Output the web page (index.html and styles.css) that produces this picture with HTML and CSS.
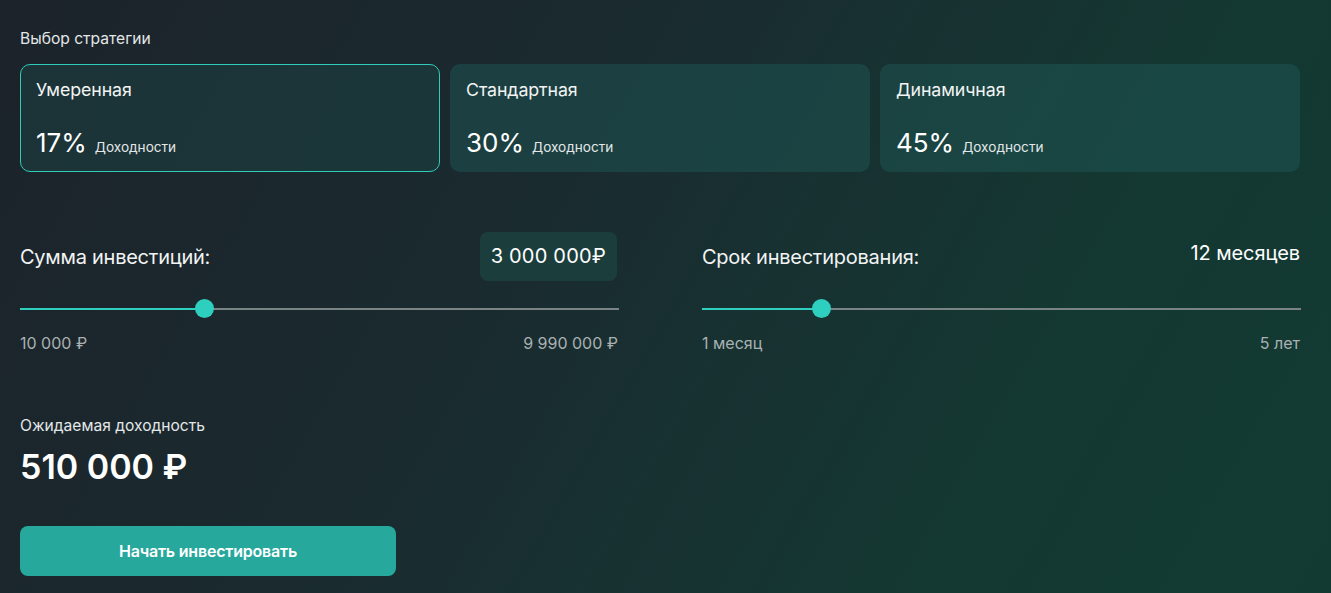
FILE: index.html
```html
<!DOCTYPE html>
<html lang="ru">
<head>
<meta charset="utf-8">
<title>Калькулятор</title>
<link rel="stylesheet" href="styles.css">
</head>
<body>
<main class="calc">
  <div class="section-label">Выбор стратегии</div>
  <div class="strategies">
    <div class="card active">
      <div class="card-title">Умеренная</div>
      <div class="card-yield"><span class="pct">17%</span><span class="pct-label">Доходности</span></div>
    </div>
    <div class="card">
      <div class="card-title">Стандартная</div>
      <div class="card-yield"><span class="pct">30%</span><span class="pct-label">Доходности</span></div>
    </div>
    <div class="card">
      <div class="card-title">Динамичная</div>
      <div class="card-yield"><span class="pct">45%</span><span class="pct-label">Доходности</span></div>
    </div>
  </div>

  <div class="sliders">
    <div class="slider-block">
      <div class="slider-head">
        <span class="slider-title">Сумма инвестиций:</span>
        <span class="value-box">3 000 000₽</span>
      </div>
      <div class="track">
        <div class="fill" style="width:184px"></div>
        <div class="thumb" style="left:175px"></div>
      </div>
      <div class="range-labels"><span>10 000 ₽</span><span>9 990 000 ₽</span></div>
    </div>
    <div class="slider-block">
      <div class="slider-head">
        <span class="slider-title">Срок инвестирования:</span>
        <span class="value-plain">12 месяцев</span>
      </div>
      <div class="track">
        <div class="fill" style="width:119px"></div>
        <div class="thumb" style="left:110px"></div>
      </div>
      <div class="range-labels"><span>1 месяц</span><span>5 лет</span></div>
    </div>
  </div>

  <div class="result">
    <div class="section-label">Ожидаемая доходность</div>
    <div class="result-value">510 000 ₽</div>
  </div>

  <button class="cta">Начать инвестировать</button>
</main>
</body>
</html>
```

FILE: styles.css
```css
* { box-sizing: border-box; }
html, body { height: 100%; }
body {
  margin: 0;
  font-family: Inter, "Noto Sans", sans-serif;
  color: #ffffff;
  background: linear-gradient(120deg, #1c232a 0%, #1a2b30 40%, #143832 75%, #123a33 100%);
  min-height: 593px;
  overflow: hidden;
}
.calc {
  width: 1280px;
  margin-left: 20px;
  padding-top: 29px;
}
.section-label {
  font-size: 15.6px;
  line-height: 20px;
  color: #e3e7e8;
}
.strategies {
  margin-top: 15px;
  display: grid;
  grid-template-columns: repeat(3, 420px);
  gap: 10px;
}
.card {
  height: 108px;
  border-radius: 10px;
  background: rgba(30, 92, 88, 0.45);
  padding: 13px 15px 0 15px;
  border: 1px solid transparent;
}
.card.active {
  border-color: #2fcdb8;
  background: rgba(30, 80, 78, 0.35);
}
.card-title {
  font-size: 17.8px;
  line-height: 24px;
  color: #f2f4f4;
  letter-spacing: -0.1px;
}
.card-yield {
  margin-top: 25px;
  display: flex;
  align-items: baseline;
  gap: 8px;
}
.pct {
  font-size: 26px;
  line-height: 32px;
  color: #ffffff;
}
.pct-label {
  font-size: 13.6px;
  color: #e3e7e8;
}
.sliders {
  margin-top: 60px;
  display: grid;
  grid-template-columns: 599px 599px;
  gap: 83px;
}
.slider-head {
  display: flex;
  justify-content: space-between;
  align-items: flex-start;
  height: 50px;
}
.slider-title {
  font-size: 20px;
  line-height: 24px;
  margin-top: 13px;
  color: #f2f4f4;
  letter-spacing: -0.25px;
}
.value-box {
  font-size: 20px;
  line-height: 24px;
  padding: 12px 11px 13px 11px;
  border-radius: 8px;
  background: #1b3e3d;
  margin-right: 2px;
  letter-spacing: 0.2px;
}
.value-plain {
  font-size: 20px;
  line-height: 24px;
  margin-top: 9px;
  margin-right: 1px;
  letter-spacing: -0.1px;
}
.track {
  position: relative;
  height: 2px;
  margin-top: 26px;
  background: #7a8484;
}
.fill {
  position: absolute;
  left: 0;
  top: 0;
  height: 2px;
  background: #2ecfbf;
}
.thumb {
  position: absolute;
  top: -9px;
  width: 19px;
  height: 19px;
  border-radius: 50%;
  background: #2ecfbf;
}
.range-labels {
  margin-top: 23px;
  display: flex;
  justify-content: space-between;
  font-size: 16px;
  line-height: 20px;
  color: #a9b1b2;
  padding-right: 1px;
}
.result {
  margin-top: 63px;
}
.result-value {
  margin-top: 9px;
  font-size: 34px;
  line-height: 44px;
  font-weight: 600;
}
.cta {
  margin-top: 37px;
  width: 376px;
  height: 50px;
  border: none;
  border-radius: 8px;
  background: #27a89c;
  color: #ffffff;
  font-family: inherit;
  font-size: 16px;
  font-weight: 600;
  letter-spacing: -0.2px;
  cursor: pointer;
}
```
